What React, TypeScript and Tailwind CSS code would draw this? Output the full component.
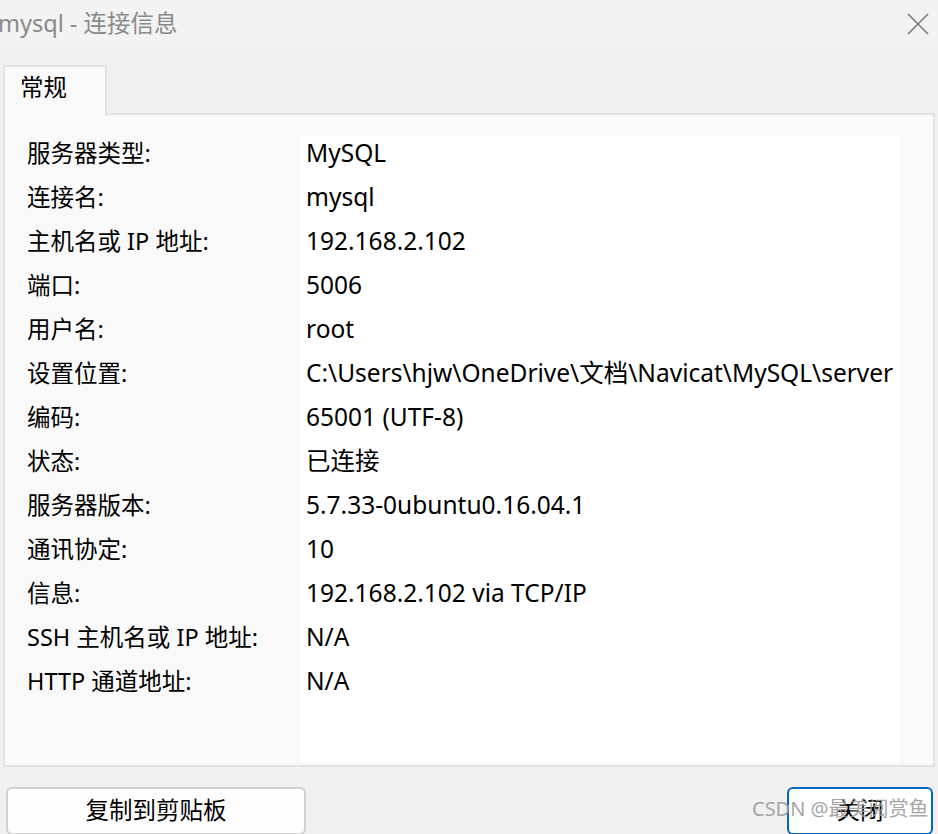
const rows: [string, string][] = [
  ["服务器类型:", "MySQL"],
  ["连接名:", "mysql"],
  ["主机名或 IP 地址:", "192.168.2.102"],
  ["端口:", "5006"],
  ["用户名:", "root"],
  ["设置位置:", "C:\\Users\\hjw\\OneDrive\\文档\\Navicat\\MySQL\\servers\\mysql"],
  ["编码:", "65001 (UTF-8)"],
  ["状态:", "已连接"],
  ["服务器版本:", "5.7.33-0ubuntu0.16.04.1"],
  ["通讯协定:", "10"],
  ["信息:", "192.168.2.102 via TCP/IP"],
  ["SSH 主机名或 IP 地址:", "N/A"],
  ["HTTP 通道地址:", "N/A"],
];

export default function App() {
  return (
    <div
      className="relative w-[938px] h-[834px] overflow-hidden bg-[#f0f0f0] text-black text-[23.5px]"
      style={{ fontFamily: '"Noto Sans", "Noto Sans CJK SC", sans-serif' }}
    >
      {/* title bar */}
      <div className="h-[48px] bg-[#f3f3f3] flex items-center justify-between">
        <span className="-ml-[2px] text-[#8a8a8a] leading-none">mysql - 连接信息</span>
        <svg width="22" height="22" viewBox="0 0 22 22" className="mr-[9px] mb-[1px]">
          <path d="M1 1 L21 21 M21 1 L1 21" stroke="#7a7a7a" strokeWidth="1.6" fill="none" />
        </svg>
      </div>

      {/* tabs */}
      <div className="pl-[3px] pt-[17px]">
        <div className="relative z-10 w-[104px] h-[51px] border-2 border-b-0 border-[#e3e3e3] bg-[#f9f9f9] pl-[15px] flex items-center leading-none pb-[7px]">
          常规
        </div>
      </div>

      {/* panel */}
      <div className="-mt-[3px] mx-[3px] h-[654px] border-2 border-[#e3e3e3] bg-[#f9f9f9] pt-[21px] pb-[3px] flex">
        <div className="w-[295px] shrink-0">
          {rows.map(([label]) => (
            <div key={label} className="h-[44px] pl-[22px] leading-[34px] whitespace-nowrap">
              {label}
            </div>
          ))}
        </div>
        <div className="w-[600px] bg-white overflow-hidden">
          {rows.map(([label, value]) => (
            <div key={label} className="h-[44px] pl-[6px] pr-[6px] text-[24.5px] leading-[34px]">
              <div className="whitespace-nowrap overflow-hidden">{value}</div>
            </div>
          ))}
        </div>
      </div>

      {/* buttons */}
      <div className="mt-[20px] px-[6px] flex justify-between">
        <button className="w-[300px] h-[48px] rounded-[6px] border-2 border-[#d0d0d0] bg-[#fdfdfd] leading-none">
          复制到剪贴板
        </button>
        <button className="mr-[-1px] w-[146px] h-[48px] rounded-[6px] border-2 border-[#0067c0] bg-white leading-none">
          关闭
        </button>
      </div>

      {/* watermark */}
      <div className="absolute left-[752px] top-[799px] text-[20px] leading-none text-[#9a9a9a]/90 whitespace-nowrap">
        CSDN @最美阅赏鱼
      </div>
    </div>
  );
}
